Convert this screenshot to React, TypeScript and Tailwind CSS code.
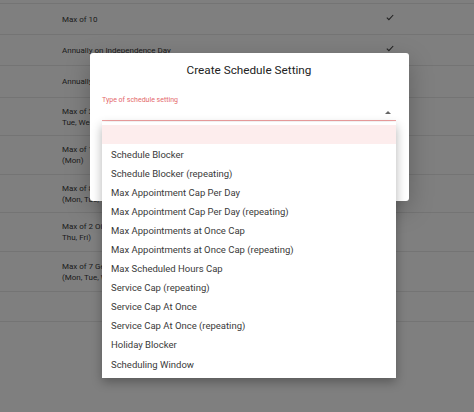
import React from "react";

type Row = { lines: string[]; height: number; check?: boolean };

const rows: Row[] = [
  { lines: ["Max of 10"], height: 31, check: true },
  { lines: ["Annually on Independence Day"], height: 31, check: true },
  { lines: ["Annually on Christmas Day"], height: 32 },
  { lines: ["Max of 3 Appointments Per Day (Mon,", "Tue, Wed, Thu, Fri)"], height: 38 },
  { lines: ["Max of 1 Appointment at Once", "(Mon)"], height: 39 },
  { lines: ["Max of 8 Scheduled Hours", "(Mon, Tue, Wed)"], height: 38 },
  { lines: ["Max of 2 Oil Changes Per Day (Mon, Wed,", "Thu, Fri)"], height: 39 },
  { lines: ["Max of 7 General Services", "(Mon, Tue, Wed, Thu, Fri)"], height: 40 },
  { lines: [], height: 30 },
];

const options = [
  "",
  "Schedule Blocker",
  "Schedule Blocker (repeating)",
  "Max Appointment Cap Per Day",
  "Max Appointment Cap Per Day (repeating)",
  "Max Appointments at Once Cap",
  "Max Appointments at Once Cap (repeating)",
  "Max Scheduled Hours Cap",
  "Service Cap (repeating)",
  "Service Cap At Once",
  "Service Cap At Once (repeating)",
  "Holiday Blocker",
  "Scheduling Window",
];

function Check() {
  return (
    <svg width="8" height="7" viewBox="0 0 8 7" fill="none">
      <path d="M0.8 3.6 L2.9 5.7 L7.2 1" stroke="#444" strokeWidth="1.1" />
    </svg>
  );
}

export default function App() {
  return (
    <div className="relative h-[412px] w-full overflow-hidden bg-white font-['Roboto',sans-serif]">
      <div className="h-[4px] border-b border-[#e8e8e8]" />
      {rows.map((row, i) => (
        <div
          key={i}
          className="flex items-center border-b border-[#e8e8e8] pl-[62px]"
          style={{ height: row.height }}
        >
          <div className="w-[320px] text-[8px] leading-[11px] text-[#3a3a3a]">
            {row.lines.map((l) => (
              <div key={l}>{l}</div>
            ))}
          </div>
          {row.check ? (
            <div className="-mt-[3px] ml-[4px]">
              <Check />
            </div>
          ) : null}
        </div>
      ))}

      <div className="absolute inset-0 bg-black/50" />

      <div className="absolute left-[90px] top-[53px] h-[148px] w-[319px] rounded-[3px] bg-white px-[12px] pr-[13px] shadow-[0_8px_24px_rgba(0,0,0,0.25)]">
        <h2 className="pt-[9px] text-center text-[11.75px] leading-[16px] text-[#222]">
          Create Schedule Setting
        </h2>
        <div className="relative mt-[17px]">
          <div className="text-[7px] leading-[10px] text-[#e4696b]">
            Type of schedule setting
          </div>
          <div className="flex h-[16px] items-center justify-end border-b border-[#f0a0a0] pr-[5px]">
            <div className="h-0 w-0 border-x-[3px] border-b-[3px] border-x-transparent border-b-[#666]" />
          </div>
          <div className="absolute left-0 right-0 top-full z-10 mt-[1px] bg-white pb-[5px] pt-[3px] shadow-[0_4px_10px_rgba(0,0,0,0.3)]">
            {options.map((o, i) => (
              <div
                key={i}
                className={`flex h-[19.1px] items-center px-[9px] pt-[2px] text-[9.5px] text-[#3a3a3a] ${
                  i === 0 ? "bg-[#fdeded]" : ""
                }`}
              >
                {o}
              </div>
            ))}
          </div>
        </div>
      </div>
    </div>
  );
}
